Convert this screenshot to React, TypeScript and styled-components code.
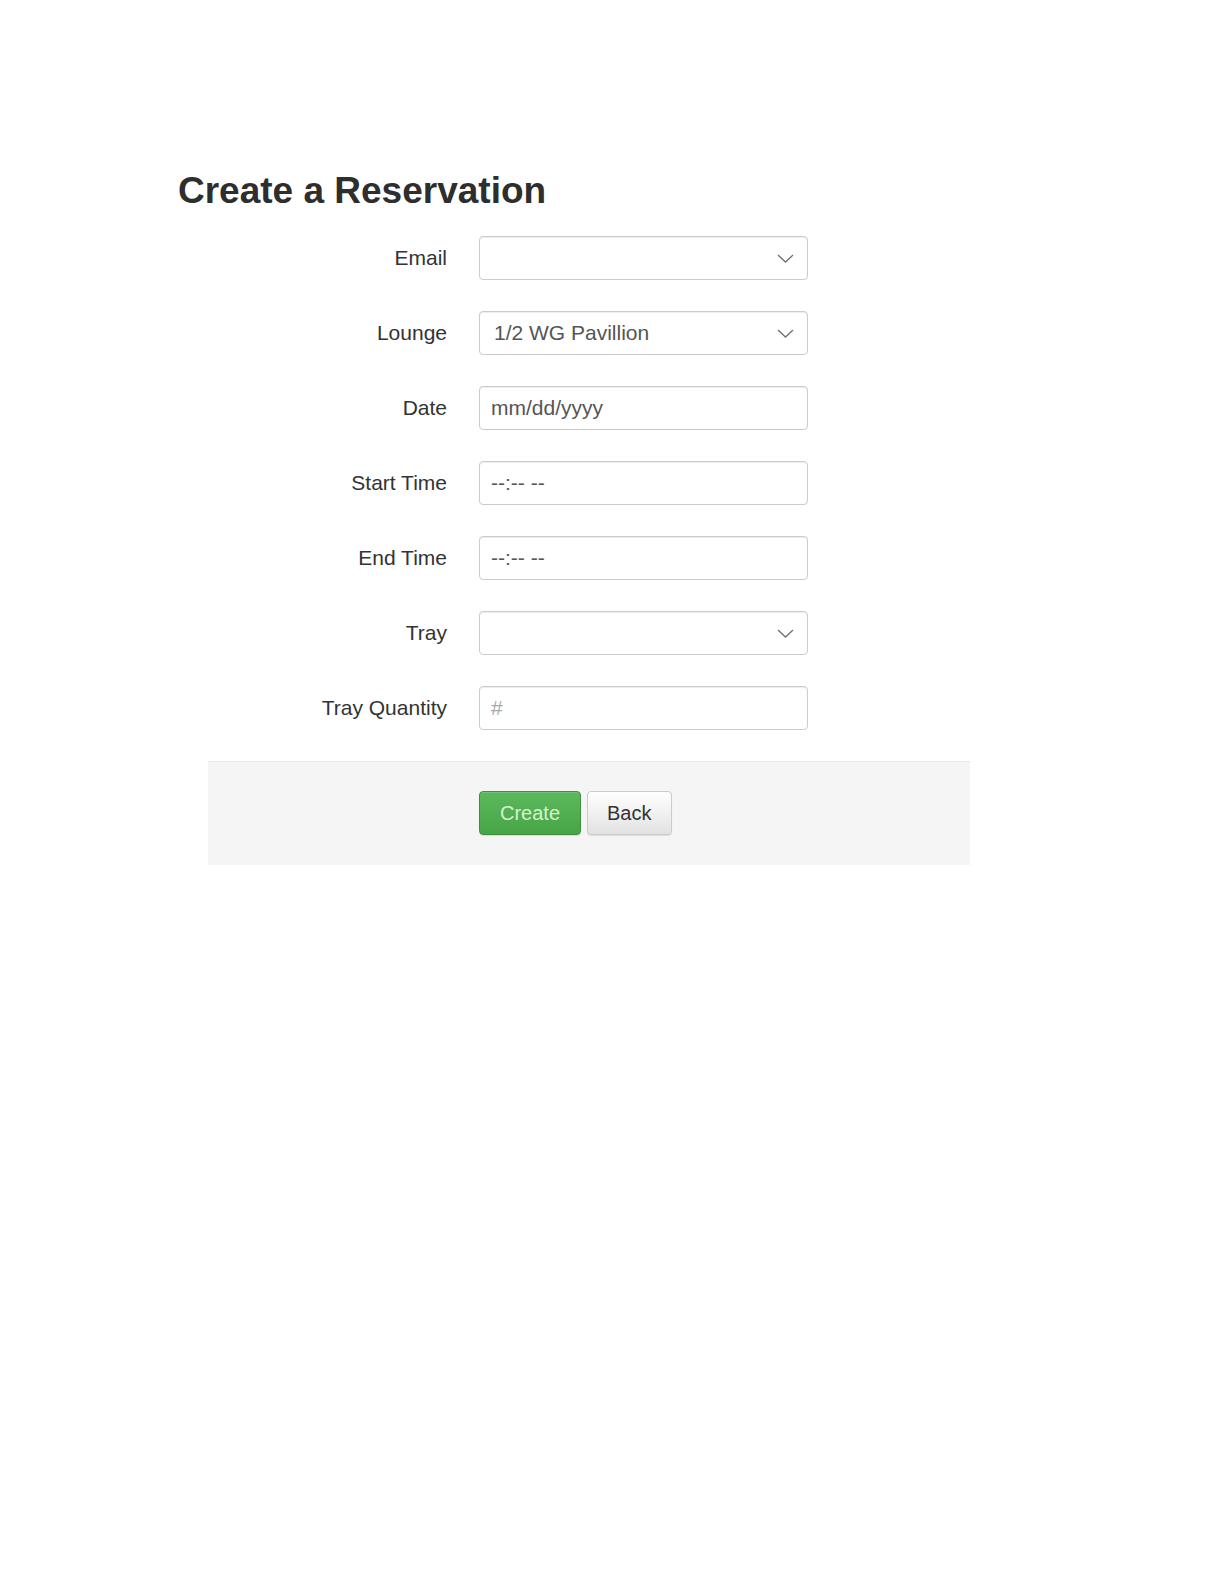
import React from "react";
import styled, { createGlobalStyle } from "styled-components";

const GlobalStyle = createGlobalStyle`
  html, body {
    margin: 0;
    padding: 0;
    background: #ffffff;
  }
  body {
    font-family: "Liberation Sans", Arial, sans-serif;
    color: #333333;
  }
  * { box-sizing: border-box; }
`;

const Page = styled.div`
  padding: 170px 0 0 178px;
  min-height: 1584px;
`;

const Title = styled.h1`
  margin: 0;
  font-family: "Liberation Sans", Arial, sans-serif;
  font-size: 37px;
  line-height: 41px;
  font-weight: 700;
  color: #2e2e2e;
`;

const Form = styled.form`
  margin: 25px 0 0 30px;
  width: 762px;
`;

const Fields = styled.div`
  display: flex;
  flex-direction: column;
  gap: 31px;
`;

const Row = styled.div`
  display: grid;
  grid-template-columns: 239px 329px;
  column-gap: 32px;
  align-items: center;
`;

const Label = styled.label`
  text-align: right;
  font-size: 21px;
  color: #333333;
`;

const fieldBase = `
  height: 44px;
  width: 329px;
  border: 1px solid #cccccc;
  border-radius: 4px;
  background: #ffffff;
  box-shadow: inset 0 1px 1px rgba(0, 0, 0, 0.075);
  font-family: "Liberation Sans", Arial, sans-serif;
  font-size: 21px;
  color: #555555;
`;

const TextInput = styled.input<{ $muted?: boolean }>`
  ${fieldBase}
  padding: 0 11px;
  outline: none;
  &::placeholder {
    color: ${(p) => (p.$muted ? "#a8a8a8" : "#555555")};
    opacity: 1;
  }
`;

const SelectBox = styled.div`
  ${fieldBase}
  display: flex;
  align-items: center;
  justify-content: space-between;
  padding: 0 13px 0 14px;
`;

const SelectValue = styled.span``;

const Chevron = () => (
  <svg width="17" height="9" viewBox="0 0 17 9" aria-hidden="true">
    <path d="M1 1 L8.5 8 L16 1" fill="none" stroke="#707070" strokeWidth="1.3" />
  </svg>
);

const Actions = styled.div`
  margin-top: 31px;
  border-top: 1px solid #e8e8e8;
  background: #f5f5f5;
  padding: 29px 0 30px 271px;
  display: flex;
  gap: 6px;
`;

const Button = styled.button<{ $variant: "success" | "default" }>`
  height: 44px;
  padding: 0 ${(p) => (p.$variant === "success" ? "20px" : "19px")};
  border-radius: 4px;
  font-family: "Liberation Sans", Arial, sans-serif;
  font-size: 20px;
  cursor: pointer;
  border: 1px solid ${(p) => (p.$variant === "success" ? "#3e8f3e" : "#cccccc")};
  color: ${(p) => (p.$variant === "success" ? "#d6f3cf" : "#333333")};
  background: ${(p) =>
    p.$variant === "success"
      ? "linear-gradient(to bottom, #5cb85c 0%, #47a547 100%)"
      : "linear-gradient(to bottom, #ffffff 0%, #e2e2e2 100%)"};
  box-shadow: inset 0 1px 0 rgba(255, 255, 255, 0.15), 0 1px 1px rgba(0, 0, 0, 0.1);
`;

type Field =
  | { label: string; kind: "select"; value: string }
  | { label: string; kind: "input"; placeholder: string; muted?: boolean };

const fields: Field[] = [
  { label: "Email", kind: "select", value: "" },
  { label: "Lounge", kind: "select", value: "1/2 WG Pavillion" },
  { label: "Date", kind: "input", placeholder: "mm/dd/yyyy" },
  { label: "Start Time", kind: "input", placeholder: "--:-- --" },
  { label: "End Time", kind: "input", placeholder: "--:-- --" },
  { label: "Tray", kind: "select", value: "" },
  { label: "Tray Quantity", kind: "input", placeholder: "#", muted: true },
];

export default function App() {
  return (
    <>
      <GlobalStyle />
      <Page>
        <Title>Create a Reservation</Title>
        <Form onSubmit={(e) => e.preventDefault()}>
          <Fields>
            {fields.map((f) => (
              <Row key={f.label}>
                <Label>{f.label}</Label>
                {f.kind === "select" ? (
                  <SelectBox>
                    <SelectValue>{f.value}</SelectValue>
                    <Chevron />
                  </SelectBox>
                ) : (
                  <TextInput placeholder={f.placeholder} $muted={f.muted} />
                )}
              </Row>
            ))}
          </Fields>
          <Actions>
            <Button type="submit" $variant="success">Create</Button>
            <Button type="button" $variant="default">Back</Button>
          </Actions>
        </Form>
      </Page>
    </>
  );
}
